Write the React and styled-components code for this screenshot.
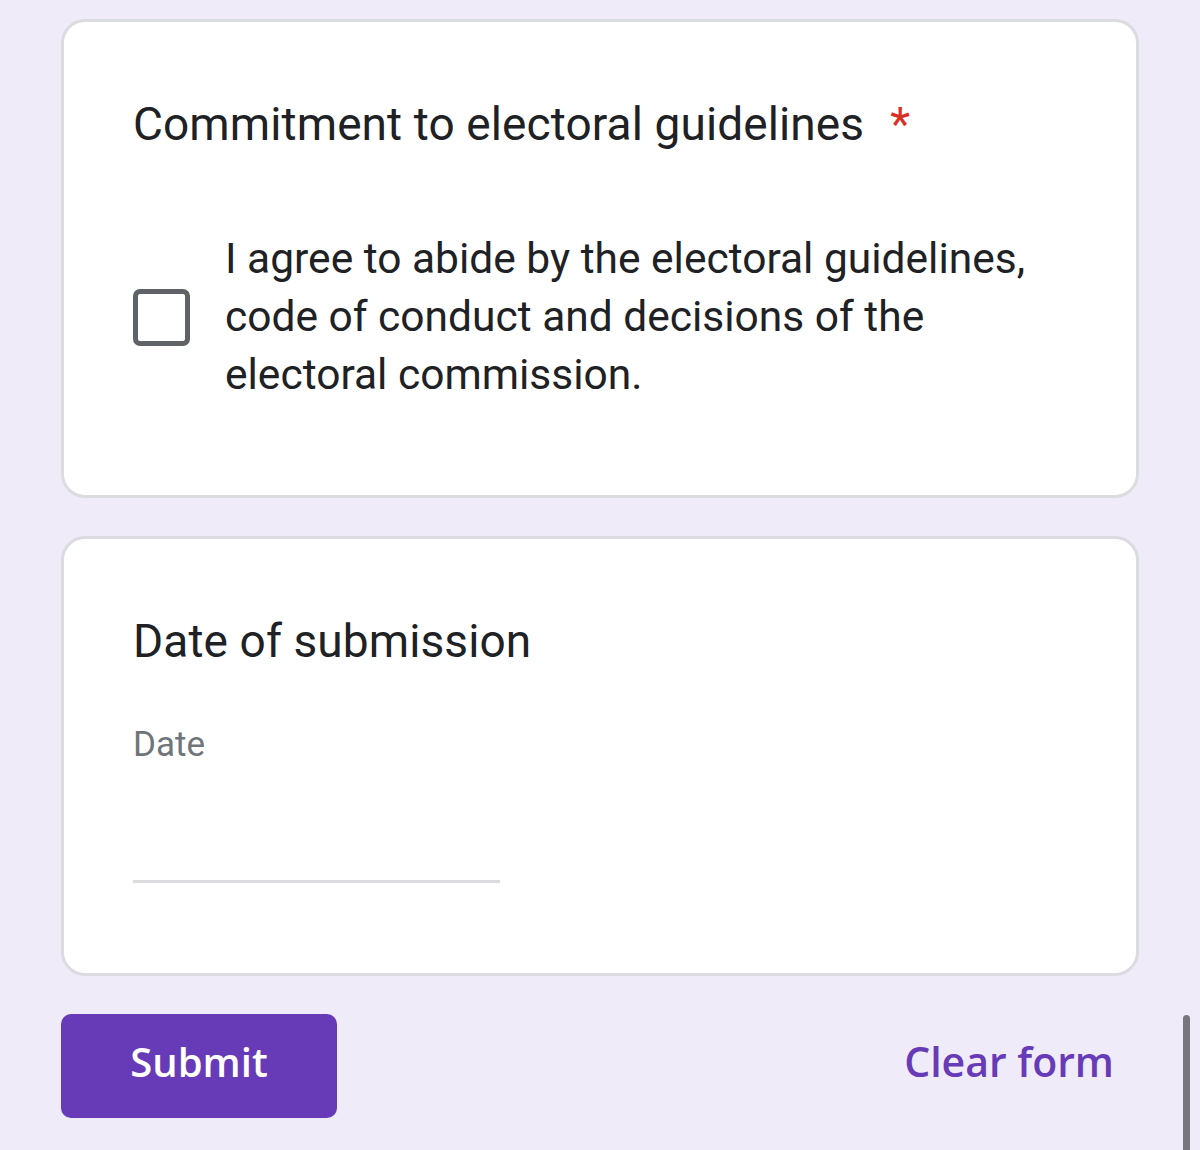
import React from 'react';
import styled, { createGlobalStyle } from 'styled-components';

const GlobalStyle = createGlobalStyle`
  html, body {
    margin: 0;
    padding: 0;
    background: #f0ebf8;
  }
  body {
    font-family: Roboto, "Noto Sans", Arial, sans-serif;
    color: #202124;
  }
`;

const Page = styled.div`
  position: relative;
  box-sizing: border-box;
  width: 1200px;
  height: 1150px;
  padding: 19px 61px 0 61px;
  display: flex;
  flex-direction: column;
  gap: 38px;
  overflow: hidden;
`;

const Card = styled.section`
  box-sizing: border-box;
  background: #fff;
  border: 3px solid #dadce0;
  border-radius: 24px;
  height: ${p => p.$height}px;
  padding: 72px 69px 0 69px;
`;

const Question = styled.h2`
  margin: 0;
  font-weight: 400;
  font-size: 46px;
  line-height: 60px;
  color: #202124;
  letter-spacing: 0.1px;
`;

const Required = styled.span`
  color: #d93025;
  margin-left: 26px;
`;

const OptionRow = styled.label`
  display: flex;
  align-items: center;
  gap: 35px;
  margin-top: 76px;
`;

const Box = styled.span`
  flex: none;
  box-sizing: border-box;
  width: 57px;
  height: 57px;
  border: 5px solid #5f6368;
  border-radius: 7px;
`;

const OptionText = styled.span`
  font-size: 42.5px;
  line-height: 58px;
  color: #202124;
  max-width: 840px;
`;

const FieldLabel = styled.div`
  margin-top: 50px;
  font-size: 35px;
  line-height: 48px;
  color: #70757a;
`;

const Underline = styled.div`
  margin-top: 111px;
  width: 367px;
  height: 3px;
  background: #dadce0;
`;

const Actions = styled.div`
  display: flex;
  align-items: center;
  justify-content: space-between;
  padding-right: 25px;
`;

const SubmitButton = styled.button`
  width: 276px;
  height: 104px;
  padding: 0 0 10px;
  border: none;
  border-radius: 10px;
  background: #673ab7;
  color: #fff;
  font-family: "Open Sans", Lato, sans-serif;
  font-weight: 600;
  font-size: 40px;
`;

const ClearButton = styled.button`
  border: none;
  background: none;
  padding: 0 0 10px;
  color: #673ab7;
  font-family: "Open Sans", Lato, sans-serif;
  font-weight: 600;
  font-size: 41px;
`;

const ScrollThumb = styled.div`
  position: absolute;
  right: 10px;
  top: 1015px;
  width: 7px;
  height: 160px;
  border-radius: 4px;
  background: #79757e;
`;

export default function App() {
  return (
    <>
      <GlobalStyle />
      <Page>
        <Card $height={479}>
          <Question>
            Commitment to electoral guidelines<Required>*</Required>
          </Question>
          <OptionRow>
            <Box />
            <OptionText>
              I agree to abide by the electoral guidelines, code of conduct and decisions of the electoral commission.
            </OptionText>
          </OptionRow>
        </Card>
        <Card $height={440}>
          <Question>Date of submission</Question>
          <FieldLabel>Date</FieldLabel>
          <Underline />
        </Card>
        <Actions>
          <SubmitButton type="button">Submit</SubmitButton>
          <ClearButton type="button">Clear form</ClearButton>
        </Actions>
        <ScrollThumb />
      </Page>
    </>
  );
}
